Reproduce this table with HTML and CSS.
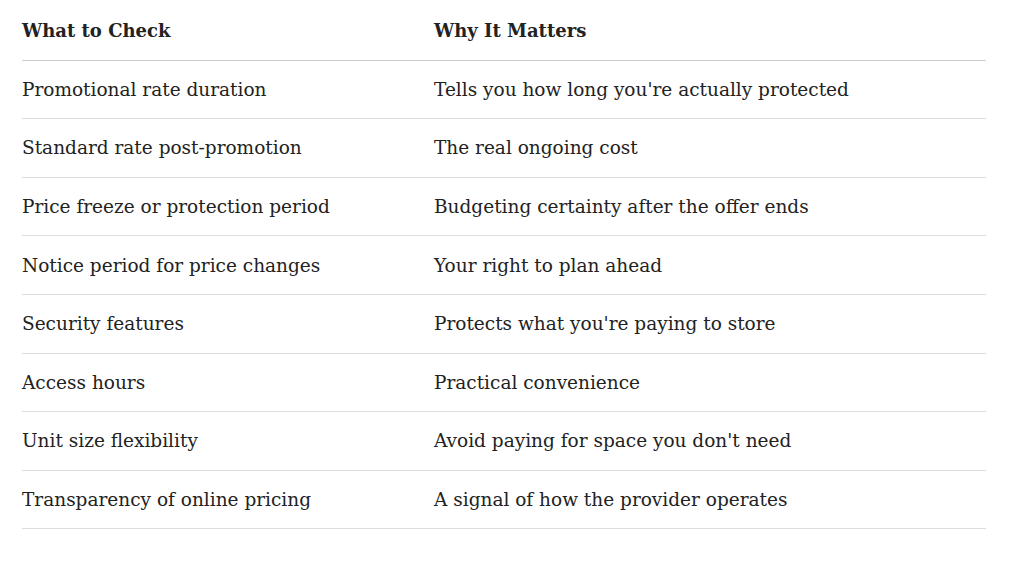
FILE: index.html
```html
<!DOCTYPE html>
<html>
<head>
<meta charset="utf-8">
<link rel="stylesheet" href="styles.css">
</head>
<body>
<table class="check-table">
  <thead>
    <tr><th>What to Check</th><th>Why It Matters</th></tr>
  </thead>
  <tbody>
    <tr><td>Promotional rate duration</td><td>Tells you how long you're actually protected</td></tr>
    <tr><td>Standard rate post-promotion</td><td>The real ongoing cost</td></tr>
    <tr><td>Price freeze or protection period</td><td>Budgeting certainty after the offer ends</td></tr>
    <tr><td>Notice period for price changes</td><td>Your right to plan ahead</td></tr>
    <tr><td>Security features</td><td>Protects what you're paying to store</td></tr>
    <tr><td>Access hours</td><td>Practical convenience</td></tr>
    <tr><td>Unit size flexibility</td><td>Avoid paying for space you don't need</td></tr>
    <tr><td>Transparency of online pricing</td><td>A signal of how the provider operates</td></tr>
  </tbody>
</table>
</body>
</html>
```
FILE: styles.css
```css
html, body {
  margin: 0;
  padding: 0;
  background: #ffffff;
}
body {
  padding: 2px 38px 0 22px;
  font-family: "DejaVu Serif", serif;
  color: #222222;
}
.check-table {
  width: 964px;
  border-collapse: collapse;
  font-size: 18.5px;
}
.check-table th,
.check-table td {
  text-align: left;
  padding: 0;
  height: 57.6px;
  vertical-align: middle;
  border-bottom: 1px solid #dddddd;
}
.check-table th {
  font-weight: 700;
  font-size: 18px;
  border-bottom-color: #cccccc;
}
.check-table th:first-child,
.check-table td:first-child {
  width: 412px;
}
```
